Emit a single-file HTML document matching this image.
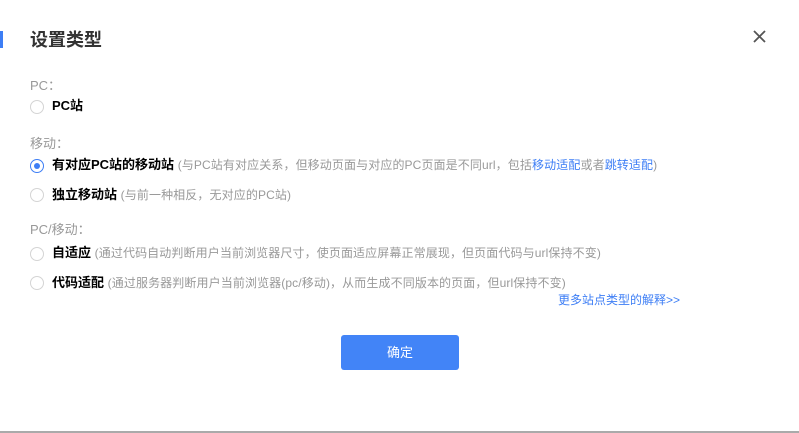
<!DOCTYPE html>
<html><head><meta charset="utf-8"><style>
body{margin:0;width:799px;height:433px;background:#fff;font-family:"Liberation Sans","Noto Sans CJK SC",sans-serif;position:relative;overflow:hidden}
.a{position:absolute;white-space:nowrap}
.bar{left:0;top:31px;width:3px;height:17px;background:#3d7ef5}
.title{left:30px;top:28px;font-size:18px;font-weight:bold;color:#333;line-height:24px}
.lab{left:30px;font-size:13px;color:#999;line-height:18px}
.r{left:30px;width:12px;height:12px;border:1px solid #d4d4d4;border-radius:50%}
.r.on{border-color:#3d7ef5}
.r.on::after{content:"";position:absolute;left:3px;top:3px;width:6px;height:6px;border-radius:50%;background:#3d7ef5}
.t{left:52px;font-size:13px;line-height:18px;color:#000}
.t b{font-weight:bold}
.t span{color:#999;font-size:12px;letter-spacing:0.11px}
.t i{font-style:normal;color:#3d7ef5}
.btn{left:341px;top:335px;width:118px;height:35px;background:#4284f7;border-radius:3px;color:#fff;font-size:13px;text-align:center;line-height:35px}
.bot{left:0;top:431px;width:799px;height:2px;background:#aaa}
</style></head><body>
<div class="a bar"></div>
<div class="a title">设置类型</div>
<svg class="a" style="left:753px;top:30px" width="13" height="13" viewBox="0 0 13 13"><path d="M1 1L12 12M12 1L1 12" stroke="#555" stroke-width="1.8"/></svg>
<div class="a lab" style="top:77px">PC：</div>
<div class="a r" style="top:100px"></div>
<div class="a t" style="top:97px"><b>PC站</b></div>
<div class="a lab" style="top:135px">移动：</div>
<div class="a r on" style="top:159px"></div>
<div class="a t" style="top:156px"><b>有对应PC站的移动站</b> <span>(与PC站有对应关系，但移动页面与对应的PC页面是不同url，包括<i>移动适配</i>或者<i>跳转适配</i>)</span></div>
<div class="a r" style="top:188px"></div>
<div class="a t" style="top:186px"><b>独立移动站</b> <span>(与前一种相反，无对应的PC站)</span></div>
<div class="a lab" style="top:221px">PC/移动：</div>
<div class="a r" style="top:247px"></div>
<div class="a t" style="top:244px"><b>自适应</b> <span>(通过代码自动判断用户当前浏览器尺寸，使页面适应屏幕正常展现，但页面代码与url保持不变)</span></div>
<div class="a r" style="top:276px"></div>
<div class="a t" style="top:274px"><b>代码适配</b> <span>(通过服务器判断用户当前浏览器(pc/移动)，从而生成不同版本的页面，但url保持不变)</span></div>
<div class="a" style="left:558px;top:291px;font-size:12px;color:#3d7ef5;line-height:18px">更多站点类型的解释&gt;&gt;</div>
<div class="a btn">确定</div>
<div class="a bot"></div>
</body></html>
